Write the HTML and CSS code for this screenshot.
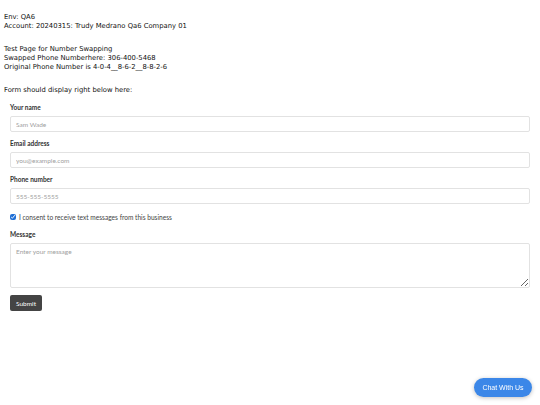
FILE: index.html
```html
<!DOCTYPE html>
<html lang="en">
    <head>
        <meta charset="UTF-8">
        <title>Number Swapping Test</title>
        <link rel="stylesheet" href="styles.css">
    </head>
    <body>
        <div class="info">
            <div class="group">
                Env: QA6<br>
                Account: 20240315: Trudy Medrano Qa6 Company 01
            </div>
            <div class="group">
                Test Page for Number Swapping<br>
                Swapped Phone Numberhere: 306-400-5468<br>
                Original Phone Number is 4-0-4__8-6-2__8-8-2-6
            </div>
            <div class="group">
                Form should display right below here:
            </div>
        </div>
        <form class="contact">
            <div class="field">
                <label for="name">Your name</label>
                <input id="name" type="text" placeholder="Sam Wade">
            </div>
            <div class="field">
                <label for="email">Email address</label>
                <input id="email" type="text" placeholder="you@example.com">
            </div>
            <div class="field">
                <label for="phone">Phone number</label>
                <input id="phone" type="text" placeholder="555-555-5555">
            </div>
            <div class="consent">
                <input id="consent" type="checkbox" checked>
                <label for="consent">I consent to receive text messages from this business</label>
            </div>
            <div class="field">
                <label for="message">Message</label>
                <textarea id="message" placeholder="Enter your message"></textarea>
            </div>
            <button type="button" class="submit">Submit</button>
        </form>
        <button type="button" class="chat">Chat With Us</button>
    </body>
</html>
```

FILE: styles.css
```css
* {
    box-sizing: border-box;
}

body {
    margin: 0;
    color: #111;
    background: #fff;
}

.info {
    padding: 13px 4px 0 4px;
    font-family: "DejaVu Sans", sans-serif;
    font-size: 6.8px;
    line-height: 9px;
}

.group {
    margin-bottom: 14px;
}

.group:last-child {
    margin-bottom: 0;
}

.contact {
    padding: 8px 10px 0 10px;
    font-family: Lato, sans-serif;
}

.field {
    margin-bottom: 7px;
}

.field label {
    display: block;
    font-size: 6.5px;
    font-weight: bold;
    line-height: 9px;
    color: #333;
    margin-bottom: 4px;
}

.field input,
.field textarea {
    display: block;
    width: 100%;
    height: 16px;
    border: 1px solid #e2e2e2;
    border-radius: 2px;
    padding: 0 5px;
    font-family: Lato, sans-serif;
    font-size: 6.5px;
    color: #333;
    background: #fff;
}

.field textarea {
    height: 45px;
    padding: 4px 5px;
    resize: vertical;
}

::placeholder {
    color: #a0a0a0;
}

.consent {
    display: flex;
    align-items: center;
    height: 9px;
    margin: 8px 0 9px 0;
    font-size: 6.6px;
    color: #444;
}

.consent input {
    width: 6px;
    height: 6px;
    margin: 0 3px 0 0;
    accent-color: #1f6fd6;
}

.submit {
    display: block;
    height: 16px;
    padding: 0 6px;
    border: 0;
    border-radius: 2px;
    background: #444;
    color: #fff;
    font-family: Lato, sans-serif;
    font-size: 6.5px;
}

.chat {
    position: fixed;
    right: 8px;
    bottom: 8px;
    width: 58px;
    height: 19px;
    border: 0;
    border-radius: 10px;
    background: #3b87e8;
    color: #fff;
    font-family: "Liberation Sans", sans-serif;
    font-size: 7px;
    box-shadow: 0 1px 4px rgba(0, 0, 0, 0.25);
}
```
